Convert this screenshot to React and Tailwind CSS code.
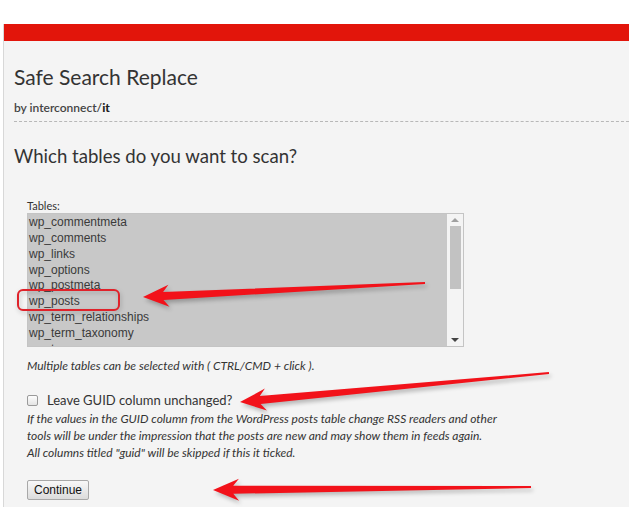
import React from "react";

const TABLES = [
  "wp_commentmeta",
  "wp_comments",
  "wp_links",
  "wp_options",
  "wp_postmeta",
  "wp_posts",
  "wp_term_relationships",
  "wp_term_taxonomy",
  "wp_terms",
];

// builds a tapered "skitch" style arrow polygon from tip to tail
function arrowPoints(tip, tail, headLen = 26, headW = 11, neckW = 4, tailW = 1) {
  const dx = tail[0] - tip[0];
  const dy = tail[1] - tip[1];
  const len = Math.hypot(dx, dy);
  const ux = dx / len;
  const uy = dy / len;
  const nx = -uy;
  const ny = ux;
  const p = (along, side) => [tip[0] + ux * along + nx * side, tip[1] + uy * along + ny * side];
  const pts = [
    tip,
    p(headLen, headW),
    p(headLen * 0.78, neckW),
    [tail[0] + nx * tailW, tail[1] + ny * tailW],
    [tail[0] - nx * tailW, tail[1] - ny * tailW],
    p(headLen * 0.78, -neckW),
    p(headLen, -headW),
  ];
  return pts.map((q) => q[0].toFixed(1) + "," + q[1].toFixed(1)).join(" ");
}

function Arrow({ tip, tail }) {
  return (
    <g>
      <polygon points={arrowPoints([tip[0] + 2, tip[1] + 3], [tail[0] + 2, tail[1] + 3])} fill="#000" opacity="0.25" filter="url(#blur)" />
      <polygon points={arrowPoints(tip, tail)} fill="#f2121a" />
    </g>
  );
}

export default function App() {
  return (
    <div className="relative min-h-screen bg-white pt-6 pl-[3px]" style={{ fontFamily: "Lato, 'Open Sans', sans-serif" }}>
      <div className="h-[483px] border-l border-[#d8d8d8] bg-[#f4f4f4]">
        <div className="h-[17px] bg-[#e2150b]" />

        <div className="pl-[10px]">
          <h1 className="pt-[23px] text-[21px] leading-[26px] text-[#333]">Safe Search Replace</h1>
          <p className="mt-[10px] text-[12px] leading-[15px] font-semibold text-[#444]">
            by interconnect/<span className="font-black text-[#222]">it</span>
          </p>
          <div className="mt-[6px] border-b border-dashed border-[#b8b8b8]" />

          <h2 className="mt-[21px] text-[18.6px] leading-[26px] text-[#333]">Which tables do you want to scan?</h2>

          <div className="pl-[13px]">
            <p className="mt-[30px] text-[11px] leading-[14px] text-[#333]">Tables:</p>

            <div className="flex h-[134px] w-[437px] overflow-hidden border border-[#c4c4c4] bg-[#c8c8c8]">
              <div className="flex-1 pl-[1px] pt-[1px] text-[12px] leading-[15.85px] text-[#3a3a3a]" style={{ fontFamily: "'Liberation Sans', Arial, sans-serif" }}>
                {TABLES.map((t) => (
                  <div key={t}>{t}</div>
                ))}
              </div>
              <div className="flex w-[16px] flex-col items-center bg-[#f4f4f4] py-[4px]">
                <span className="h-0 w-0 border-x-[4px] border-b-[4px] border-x-transparent border-b-[#a0a0a0]" />
                <div className="mt-[4px] h-[63px] w-[11px] bg-[#c2c2c2]" />
                <div className="flex-1" />
                <span className="h-0 w-0 border-x-[4px] border-t-[4px] border-x-transparent border-t-[#444]" />
              </div>
            </div>

            <p className="mt-[12px] text-[12px] italic leading-[14px] text-[#333]">
              Multiple tables can be selected with ( CTRL/CMD + click ).
            </p>

            <label className="mt-[19px] flex items-center gap-[9px] text-[13px] leading-[16px] text-[#333]">
              <span className="h-[11px] w-[11px] rounded-[2px] border border-[#9a9a9a] bg-gradient-to-b from-[#fdfdfd] to-[#e4e4e4]" />
              Leave GUID column unchanged?
            </label>
            <p className="mt-[2px] text-[12px] italic leading-[17px] text-[#333]">
              If the values in the GUID column from the WordPress posts table change RSS readers and other
              <br />
              tools will be under the impression that the posts are new and may show them in feeds again.
              <br />
              All columns titled "guid" will be skipped if this it ticked.
            </p>

            <button
              className="mt-[19px] h-[20px] w-[62px] rounded-[2px] border border-[#a8a8a8] bg-gradient-to-b from-[#f8f8f8] to-[#dcdcdc] text-[12px] leading-[18px] text-[#111]"
              style={{ fontFamily: "'Liberation Sans', Arial, sans-serif" }}
            >
              Continue
            </button>
          </div>
        </div>
      </div>

      <svg className="pointer-events-none absolute left-0 top-0" width="629" height="507">
        <defs>
          <filter id="blur" x="-10%" y="-50%" width="120%" height="200%">
            <feGaussianBlur stdDeviation="2" />
          </filter>
        </defs>
        <rect x="18" y="290" width="101" height="20" rx="5" fill="none" stroke="#000" strokeOpacity="0.15" strokeWidth="3" transform="translate(1,2)" filter="url(#blur)" />
        <rect x="18" y="290" width="101" height="20" rx="5" fill="none" stroke="#e0222a" strokeWidth="2" />
        <Arrow tip={[143, 297]} tail={[425, 283]} />
        <Arrow tip={[240, 402]} tail={[549, 373]} />
        <Arrow tip={[213, 490]} tail={[531, 487]} />
      </svg>
    </div>
  );
}
